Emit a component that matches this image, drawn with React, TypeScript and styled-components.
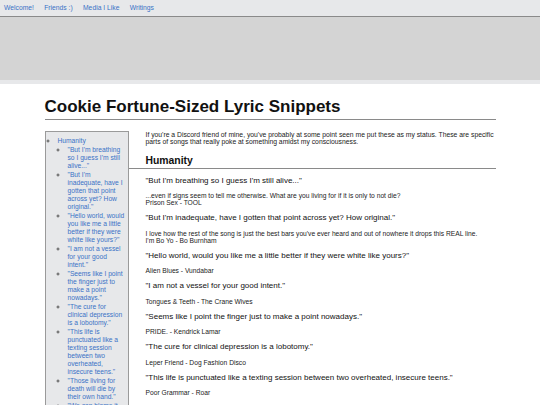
import { FC } from "react";
import { createGlobalStyle, styled } from "styled-components";

interface Snippet {
  quote: string;
  detail?: string;
  source?: string;
}

const snippets: Snippet[] = [
  {
    quote: "But I'm breathing so I guess I'm still alive...",
    detail:
      "...even if signs seem to tell me otherwise. What are you living for if it is only to not die?",
    source: "Prison Sex - TOOL",
  },
  {
    quote:
      "But I'm inadequate, have I gotten that point across yet? How original.",
    detail:
      "I love how the rest of the song is just the best bars you've ever heard and out of nowhere it drops this REAL line.",
    source: "I'm Bo Yo - Bo Burnham",
  },
  {
    quote:
      "Hello world, would you like me a little better if they were white like yours?",
    source: "Alien Blues - Vundabar",
  },
  {
    quote: "I am not a vessel for your good intent.",
    source: "Tongues & Teeth - The Crane Wives",
  },
  {
    quote: "Seems like I point the finger just to make a point nowadays.",
    source: "PRIDE. - Kendrick Lamar",
  },
  {
    quote: "The cure for clinical depression is a lobotomy.",
    source: "Leper Friend - Dog Fashion Disco",
  },
  {
    quote:
      "This life is punctuated like a texting session between two overheated, insecure teens.",
    source: "Poor Grammar - Roar",
  },
  {
    quote: "Those living for death will die by their own hand.",
  },
  {
    quote: "We can blame it on that I'm young.",
  },
];

const GlobalStyle = createGlobalStyle`
  html, body {
    margin: 0;
    padding: 0;
    background: #ffffff;
  }
  body {
    font-family: "Liberation Sans", Arial, Helvetica, sans-serif;
    color: #111;
  }
`;

const NavBar = styled.nav`
  display: flex;
  align-items: center;
  gap: 10.3px;
  height: 16px;
  padding-left: 4px;
  background: #e7e8ea;
  border-bottom: 1px solid #8a8a8a;
`;

const NavLink = styled.a`
  font-size: 6.75px;
  line-height: 1;
  color: #3a72c6;
  text-decoration: none;
`;

const Banner = styled.header`
  height: 63px;
  background: #d4d4d4;
  border-bottom: 4px solid #e7e8ea;
`;

const Page = styled.main`
  width: 451px;
  margin: 13px auto 0;
`;

const Title = styled.h1`
  margin: 0;
  padding-bottom: 2px;
  font-size: 17px;
  line-height: 20px;
  font-weight: 700;
  color: #111;
  border-bottom: 1px solid #8a8a8a;
`;

const Content = styled.div`
  padding-top: 11px;
`;

const Sidebar = styled.aside`
  float: left;
  box-sizing: border-box;
  width: 84px;
  margin-right: 17px;
  padding: 5px 1.5px 5px 0;
  background: #e7e8ea;
  border: 1px solid #9a9a9a;
`;

const TocList = styled.ul<{ $nested?: boolean }>`
  margin: ${({ $nested }) => ($nested ? "1px 0 0" : "0")};
  padding-left: ${({ $nested }) => ($nested ? "10px" : "12px")};
  list-style: circle;
  font-size: 6.7px;
  line-height: 8px;
  color: #555;
`;

const TocItem = styled.li`
  & + & {
    margin-top: 1px;
  }
`;

const TocLink = styled.a`
  color: #3a72c6;
  text-decoration: none;
`;

const Intro = styled.p`
  margin: 0;
  font-size: 6.8px;
  line-height: 7px;
  color: #222;
`;

const SectionTitle = styled.h2`
  margin: 9.5px 0 7px;
  padding-bottom: 1px;
  font-size: 10.4px;
  line-height: 12px;
  font-weight: 700;
  color: #111;
  border-bottom: 1px solid #8a8a8a;
`;

const Quote = styled.p`
  margin: 7px 0;
  font-size: 8px;
  line-height: 9.5px;
  color: #111;
`;

const Note = styled.p`
  margin: 7px 0;
  font-size: 6.7px;
  line-height: 7px;
  color: #222;
`;

const SnippetBlock: FC<{ snippet: Snippet }> = ({ snippet }) => (
  <>
    <Quote>"{snippet.quote}"</Quote>
    {(snippet.detail || snippet.source) && (
      <Note>
        {snippet.detail}
        {snippet.detail && snippet.source && <br />}
        {snippet.source}
      </Note>
    )}
  </>
);

export default function App() {
  const listed = snippets.filter((s) => s.source);

  return (
    <>
      <GlobalStyle />
      <NavBar>
        <NavLink href="#">Welcome!</NavLink>
        <NavLink href="#">Friends :)</NavLink>
        <NavLink href="#">Media I Like</NavLink>
        <NavLink href="#">Writings</NavLink>
      </NavBar>
      <Banner />
      <Page>
        <Title>Cookie Fortune-Sized Lyric Snippets</Title>
        <Content>
          <Sidebar>
            <TocList>
              <TocItem>
                <TocLink href="#humanity">Humanity</TocLink>
                <TocList $nested>
                  {snippets.map((s) => (
                    <TocItem key={s.quote}>
                      <TocLink href="#humanity">"{s.quote}"</TocLink>
                    </TocItem>
                  ))}
                </TocList>
              </TocItem>
            </TocList>
          </Sidebar>
          <Intro>
            If you're a Discord friend of mine, you've probably at some point
            seen me put these as my status. These are specific parts of songs
            that really poke at something amidst my consciousness.
          </Intro>
          <SectionTitle id="humanity">Humanity</SectionTitle>
          {listed.map((s) => (
            <SnippetBlock key={s.quote} snippet={s} />
          ))}
        </Content>
      </Page>
    </>
  );
}
